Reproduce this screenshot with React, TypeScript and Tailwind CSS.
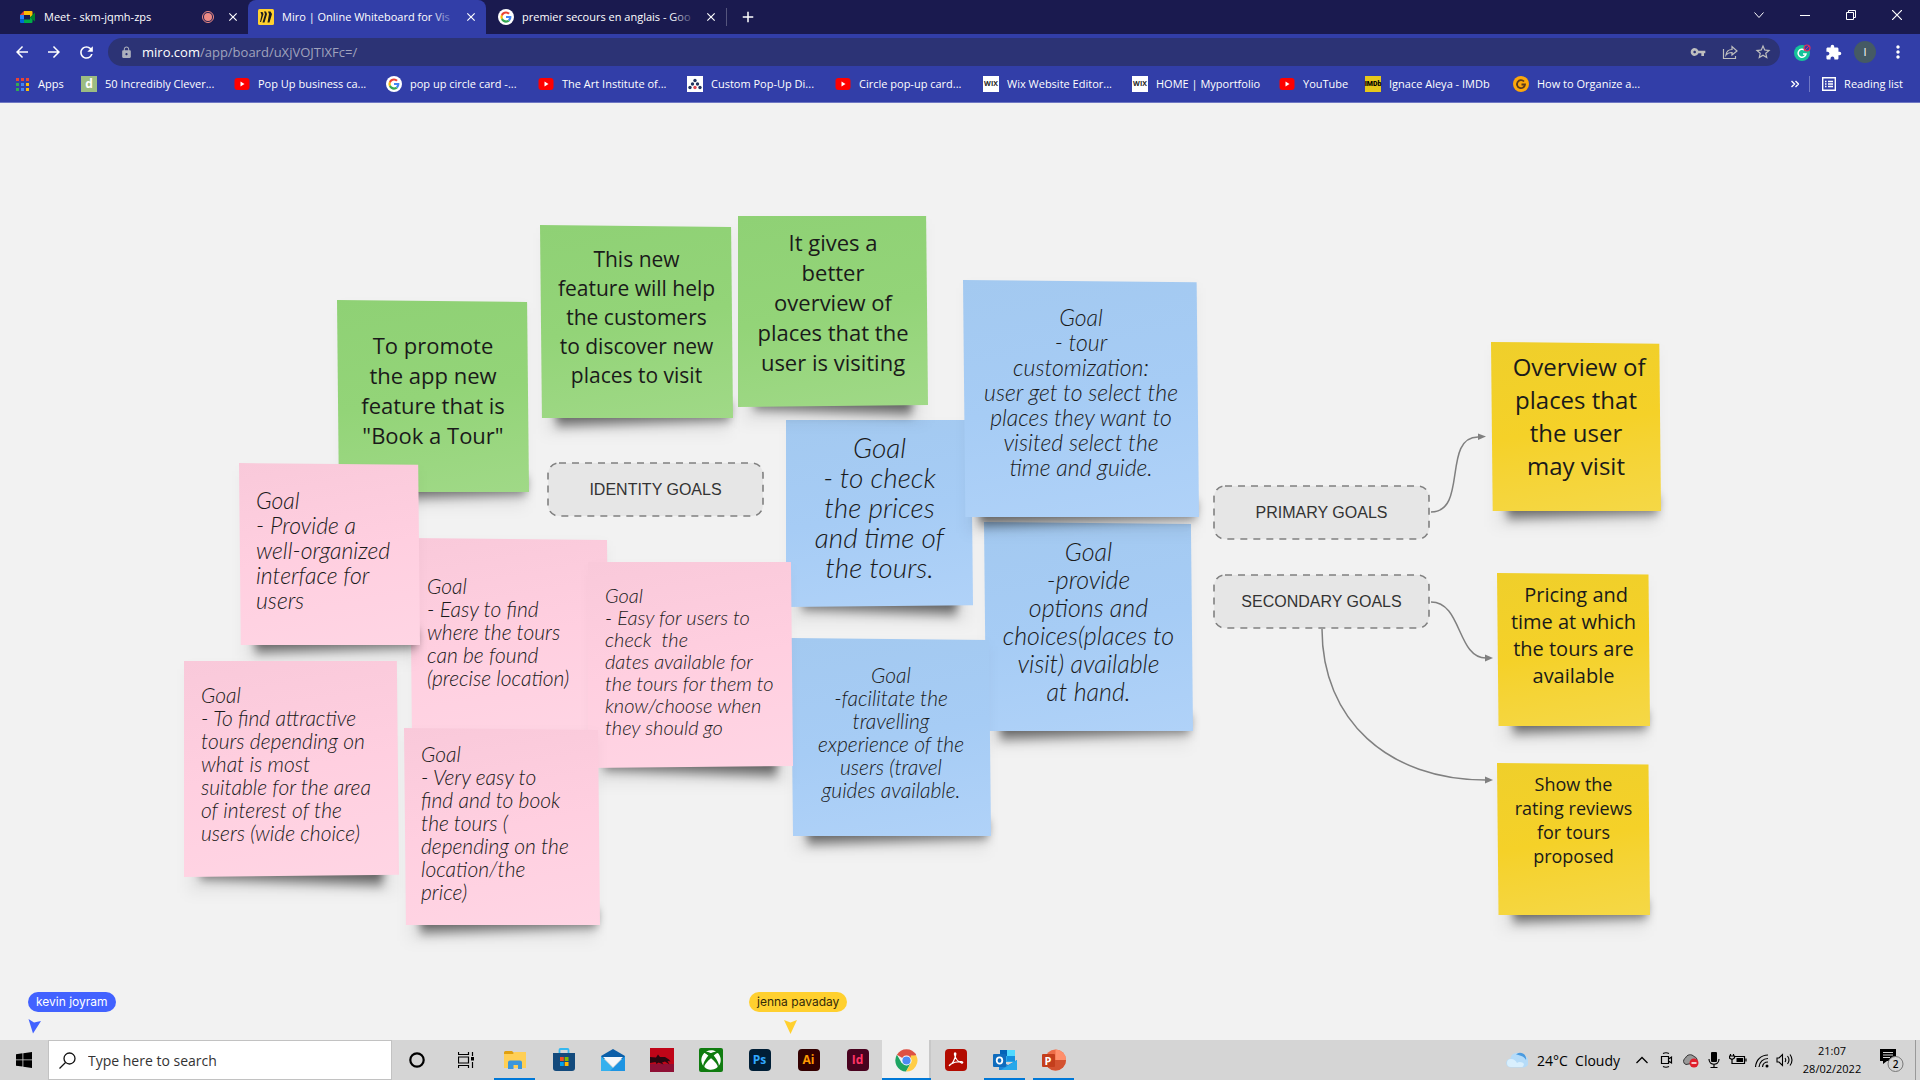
import React from 'react';
import {
  MdArrowBack, MdArrowForward, MdRefresh, MdLock, MdVpnKey, MdStarBorder, MdExtension, MdMoreVert, MdClose, MdAdd,
} from 'react-icons/md';
import { FaXbox } from 'react-icons/fa';

/* ---------- small icons ---------- */

const GoogleIcon = () => (
  <svg viewBox="0 0 16 16" className="size-4 shrink-0">
    <circle cx="8" cy="8" r="8" fill="#fff" />
    <path d="M13.4 8.1c0-.4 0-.7-.1-1H8v2h3c-.1.8-.5 1.3-1.1 1.700l1.700 1.400c1.100-1 1.800-2.400 1.800-4.100z" fill="#4285f4" />
    <path d="M8 13.700c1.500 0 2.800-.5 3.700-1.400L9.900 10.900c-.5.300-1.100.5-1.900.5-1.500 0-2.700-1-3.200-2.300L3 10.500c.9 1.900 2.800 3.200 5 3.200z" fill="#34a853" />
    <path d="M4.800 9.100a3.400 3.400 0 0 1 0-2.200L3 5.500a5.600 5.600 0 0 0 0 5z" fill="#fbbc05" />
    <path d="M8 4.600c.8 0 1.600.3 2.200.9l1.600-1.600A5.500 5.500 0 0 0 8 2.400c-2.200 0-4.100 1.200-5 3.100l1.800 1.400C5.300 5.600 6.500 4.600 8 4.600z" fill="#ea4335" />
  </svg>
);

const MeetIcon = () => (
  <svg viewBox="0 0 16 16" className="size-4 shrink-0">
    <path d="M0 6l4-4v4z" fill="#ea4335" />
    <path d="M4 2h7.500a1 1 0 0 1 1 1v3.500L10 8.500V6H4z" fill="#fbbc04" />
    <path d="M0 6h4v4.500H0z" fill="#2684fc" />
    <path d="M0 10.500h4V14H1a1 1 0 0 1-1-1z" fill="#0066da" />
    <path d="M4 10.500h6V8l2.500 2v3a1 1 0 0 1-1 1H4z" fill="#00ac47" />
    <path d="M10 8.200L15 3.500v9L10 8.500z" fill="#00832d" />
  </svg>
);

const MiroIcon = () => (
  <svg viewBox="0 0 16 16" className="size-4 shrink-0">
    <rect width="16" height="16" rx="1.500" fill="#ffd02f" />
    <path d="M2.500 3h2l1 2-2.500 8H2l1.500-7zM6 2.500h2l1 2.500-2.500 8.500h-2L7 5zM10 2.500h2.500L14 5l-2.500 8.500h-2L11 5z" fill="#1c1c1e" />
  </svg>
);

const YouTubeIcon = () => (
  <svg viewBox="0 0 16 16" className="size-4 shrink-0">
    <rect x="0.500" y="2" width="15" height="12" rx="3" fill="#f00" />
    <path d="M6.500 5.500v5l4-2.500z" fill="#fff" />
  </svg>
);

const AppsIcon = () => {
  const colors = ['#ea4335', '#ea4335', '#ea4335', '#34a853', '#4285f4', '#fbbc05', '#34a853', '#4285f4', '#fbbc05'];
  return (
    <svg viewBox="0 0 15 15" className="size-[15px] shrink-0">
      {colors.map((c, i) => (
        <rect key={i} x={(i % 3) * 5 + 1} y={Math.floor(i / 3) * 5 + 1} width="3" height="3" fill={c} />
      ))}
    </svg>
  );
};

const PopUpIcon = () => (
  <svg viewBox="0 0 16 16" className="size-4 shrink-0">
    <rect width="16" height="16" fill="#fff" />
    <g fill="#23345f">
      <circle cx="8" cy="4.500" r="1.700" /><circle cx="5.500" cy="8" r="1.700" /><circle cx="10.500" cy="8" r="1.700" />
      <circle cx="3" cy="11.500" r="1.700" /><circle cx="13" cy="11.500" r="1.700" />
    </g>
    <circle cx="8" cy="11.500" r="1.700" fill="#e2464f" />
  </svg>
);

const DIcon = () => (
  <span className="flex size-4 shrink-0 items-center justify-center bg-[#9cbc82] text-[12px] leading-4 font-bold text-white">d</span>
);
const WixIcon = () => (
  <span className="flex size-4 shrink-0 items-center justify-center bg-white text-[7px] leading-4 font-bold text-[#222]">WIX</span>
);
const ImdbIcon = () => (
  <span className="flex size-4 shrink-0 items-center justify-center bg-[#e6c71a] font-['Roboto',sans-serif] text-[7px] leading-4 font-black text-black">IMDb</span>
);
const OrangeIcon = () => (
  <svg viewBox="0 0 16 16" className="size-4 shrink-0">
    <circle cx="8" cy="8" r="8" fill="#fca70b" />
    <path d="M11 5.500A4 4 0 1 0 12 8.500H8.500" fill="none" stroke="#5b3a1c" strokeWidth="1.800" />
  </svg>
);

/* ---------- browser chrome ---------- */

function TabTitle({ children, fade }: { children: string; fade?: string }) {
  return (
    <span className="relative min-w-0 flex-1 overflow-hidden whitespace-nowrap">
      {children}
      {fade && <span className={`absolute inset-y-0 right-0 w-6 bg-linear-to-r from-transparent ${fade}`} />}
    </span>
  );
}

function TabStrip() {
  return (
    <div role="tablist" className="flex h-[34px] items-stretch bg-[#1a1a4f] text-[11px] text-white">
      <div role="tab" className="flex w-[248px] items-center gap-2 pr-2 pl-5">
        <MeetIcon />
        <TabTitle>Meet - skm-jqmh-zps</TabTitle>
        <svg viewBox="0 0 12 12" className="size-3 shrink-0"><circle cx="6" cy="6" r="5.500" fill="none" stroke="#ee8a85" /><circle cx="6" cy="6" r="4" fill="#ee8a85" /></svg>
        <button aria-label="Close tab" className="ml-1"><MdClose className="size-[14px]" /></button>
      </div>
      <div role="tab" aria-selected="true" className="flex w-[238px] items-center gap-2 rounded-t-lg bg-[#323ea8] pr-2 pl-[10px]">
        <MiroIcon />
        <TabTitle fade="to-[#323ea8]">Miro | Online Whiteboard for Vis</TabTitle>
        <button aria-label="Close tab"><MdClose className="size-[14px]" /></button>
      </div>
      <div role="tab" className="flex w-[240px] items-center gap-2 pr-2 pl-3">
        <GoogleIcon />
        <TabTitle fade="to-[#1a1a4f]">premier secours en anglais - Goo</TabTitle>
        <button aria-label="Close tab"><MdClose className="size-[14px]" /></button>
      </div>
      <div className="my-2 w-px bg-[#55557d]" />
      <button aria-label="New tab" className="w-[42px] pl-3"><MdAdd className="size-[18px]" /></button>
      <div className="ml-auto flex items-center pb-1">
        <button aria-label="Search tabs" className="flex w-[46px] justify-center">
          <svg viewBox="0 0 10 10" className="size-[10px]" fill="none" stroke="#fff"><path d="M0.500 2.500l4.500 5 4.500-5" /></svg>
        </button>
        <button aria-label="Minimize" className="flex w-[46px] justify-center">
          <svg viewBox="0 0 10 10" className="size-[10px]" fill="none" stroke="#fff"><path d="M0 5.500h10" /></svg>
        </button>
        <button aria-label="Restore" className="flex w-[46px] justify-center">
          <svg viewBox="0 0 10 10" className="size-[10px]" fill="none" stroke="#fff"><path d="M0.500 2.500h7v7h-7zM2.500 2.500v-2h7v7h-2" /></svg>
        </button>
        <button aria-label="Close" className="flex w-[46px] justify-center">
          <svg viewBox="0 0 10 10" className="size-[10px]" fill="none" stroke="#fff" strokeWidth="1.200"><path d="M0 0l10 10M10 0L0 10" /></svg>
        </button>
      </div>
    </div>
  );
}

function Toolbar() {
  return (
    <div className="flex h-8 items-center bg-[#323ea8] pt-1 text-white">
      <div className="flex w-[108px] items-center gap-[14px] pl-[13px]">
        <button aria-label="Back"><MdArrowBack className="size-[18px]" /></button>
        <button aria-label="Forward"><MdArrowForward className="size-[18px]" /></button>
        <button aria-label="Reload"><MdRefresh className="size-[19px]" /></button>
      </div>
      <div className="flex h-7 flex-1 items-center rounded-full bg-[#2c3375] pr-2 pl-3 text-[#bfbfbf]">
        <MdLock className="size-[13px] text-[#adb0bd]" />
        <label htmlFor="address" className="ml-[9px] text-[13px] leading-5 text-white">miro.com</label>
        <input id="address" defaultValue="/app/board/uXjVOJTIXFc=/" className="min-w-0 flex-1 bg-transparent text-[13px] leading-5 text-[#a0a3bd] outline-none" />
        <div className="flex items-center gap-4">
          <button aria-label="Passwords"><MdVpnKey className="size-4" /></button>
          <button aria-label="Share">
            <svg viewBox="0 0 16 16" className="size-4" fill="none" stroke="currentColor" strokeWidth="1.200"><path d="M1.500 5v9.500h12V12M4 11c.5-4 3-5.500 6-5.500V2.500L15 7l-5 4V8.500C7.500 8.500 5.500 9 4 11z" /></svg>
          </button>
          <button aria-label="Bookmark"><MdStarBorder className="size-[18px]" /></button>
        </div>
      </div>
      <div className="flex w-[140px] items-center pl-[14px]">
        <button aria-label="Grammarly">
          <svg viewBox="0 0 17 17" className="size-[17px]"><circle cx="8" cy="9" r="8" fill="#15c39a" /><path d="M10.500 6A4 4 0 1 0 12 10H9" fill="none" stroke="#fff" strokeWidth="1.500" /><circle cx="13" cy="4" r="3" fill="#323ea8" stroke="#e5305a" strokeWidth="1.200" /><path d="M11 6l4-4" stroke="#e5305a" /></svg>
        </button>
        <button aria-label="Extensions" className="ml-[14px]"><MdExtension className="size-[17px]" /></button>
        <button aria-label="Profile" className="ml-3 flex size-[22px] items-center justify-center rounded-full bg-[#455a64] text-[11px]">I</button>
        <button aria-label="Menu" className="ml-3"><MdMoreVert className="size-5" /></button>
      </div>
    </div>
  );
}

const bookmarks: { label: string; icon: () => React.ReactElement; width: string }[] = [
  { label: 'Apps', icon: AppsIcon, width: 'w-[66px]' },
  { label: '50 Incredibly Clever...', icon: DIcon, width: 'w-[153px]' },
  { label: 'Pop Up business ca...', icon: YouTubeIcon, width: 'w-[152px]' },
  { label: 'pop up circle card -...', icon: GoogleIcon, width: 'w-[152px]' },
  { label: 'The Art Institute of...', icon: YouTubeIcon, width: 'w-[149px]' },
  { label: 'Custom Pop-Up Di...', icon: PopUpIcon, width: 'w-[148px]' },
  { label: 'Circle pop-up card...', icon: YouTubeIcon, width: 'w-[148px]' },
  { label: 'Wix Website Editor...', icon: WixIcon, width: 'w-[149px]' },
  { label: 'HOME | Myportfolio', icon: WixIcon, width: 'w-[147px]' },
  { label: 'YouTube', icon: YouTubeIcon, width: 'w-[86px]' },
  { label: 'Ignace Aleya - IMDb', icon: ImdbIcon, width: 'w-[148px]' },
  { label: 'How to Organize a...', icon: OrangeIcon, width: 'w-[148px]' },
];

function BookmarkBar() {
  return (
    <nav className="flex h-[37px] items-center border-b border-[#6f78c4] bg-[#323ea8] pr-[17px] pl-[15px] text-[11px] text-white">
      {bookmarks.map(({ label, icon: Icon, width }, i) => (
        <a key={i} href="#" className={`flex shrink-0 items-center gap-2 whitespace-nowrap ${width}`}>
          <Icon />
          {label}
        </a>
      ))}
      <div className="ml-auto flex items-center">
        <button aria-label="More bookmarks">
          <svg viewBox="0 0 8 8" className="size-2" fill="none" stroke="#fff" strokeWidth="1.400"><path d="M0.500 1l3 3-3 3M4.500 1l3 3-3 3" /></svg>
        </button>
        <div className="mr-3 ml-[10px] h-4 w-px bg-[#6f78c4]" />
        <button className="flex items-center gap-2">
          <svg viewBox="0 0 14 14" className="size-[14px]" fill="none" stroke="#fff" strokeWidth="1.400"><path d="M0.700 0.700h12.600v12.600H0.700zM3 4.500h1.500M3 7h1.500M3 9.500h1.500M6 4.500h5M6 7h5M6 9.500h5" /></svg>
          Reading list
        </button>
      </div>
    </nav>
  );
}

/* ---------- board ---------- */

type Note = {
  x: number; y: number; w: number; h: number; pad: number;
  color: string; text: string; lines: string[]; lean: 'left' | 'right';
};

const GREEN = 'from-[#8fd175] via-[#93d478] to-[#a0d987]';
const BLUE = 'from-[#a3c9f0] via-[#a6ccf5] to-[#b0d2f8]';
const PINK = 'from-[#f9c9da] via-[#ffcfe0] to-[#ffd5e4]';
const YELLOW = 'from-[#efcf2b] via-[#f5d128] to-[#f5d846]';
const SANS = "text-center font-['Open_Sans',sans-serif]";
const HAND = "font-['Lato',cursive] italic font-light";

const notes: Note[] = [
  { x: 786, y: 317, w: 187, h: 187, pad: 12, color: BLUE, lean: 'right', text: `${HAND} text-center text-[28px] leading-[30px]`, lines: ['Goal', '- to check', 'the prices', 'and time of', 'the tours.'] },
  { x: 984, y: 419, w: 209, h: 209, pad: 15, color: BLUE, lean: 'left', text: `${HAND} text-center text-[25px] leading-[28px]`, lines: ['Goal', '-provide', 'options and', 'choices(places to', 'visit) available', 'at hand.'] },
  { x: 791, y: 535, w: 200, h: 198, pad: 25, color: BLUE, lean: 'left', text: `${HAND} text-center text-[21px] leading-[23px]`, lines: ['Goal', '-facilitate the', 'travelling', 'experience of the', 'users (travel', 'guides available.'] },
  { x: 738, y: 113, w: 190, h: 191, pad: 11, color: GREEN, lean: 'right', text: `${SANS} text-[22px] leading-[30px]`, lines: ['It gives a', 'better', 'overview of', 'places that the', 'user is visiting'] },
  { x: 963, y: 177, w: 236, h: 237, pad: 25, color: BLUE, lean: 'left', text: `${HAND} text-center text-[23px] leading-[25px]`, lines: ['Goal', '- tour', 'customization:', 'user get to select the', 'places they want to', 'visited select the', 'time and guide.'] },
  { x: 337, y: 197, w: 192, h: 192, pad: 30, color: GREEN, lean: 'left', text: `${SANS} text-[22px] leading-[30px]`, lines: ['To promote', 'the app new', 'feature that is', '"Book a Tour"'] },
  { x: 540, y: 122, w: 193, h: 193, pad: 20, color: GREEN, lean: 'left', text: `${SANS} text-[21px] leading-[29px]`, lines: ['This new', 'feature will help', 'the customers', 'to discover new', 'places to visit'] },
  { x: 410, y: 435, w: 199, h: 198, pad: 36, color: PINK, lean: 'left', text: `${HAND} pl-[17px] text-[21px] leading-[23px]`, lines: ['Goal', '- Easy to find', 'where the tours', 'can be found', '(precise location)'] },
  { x: 588, y: 459, w: 205, h: 206, pad: 22, color: PINK, lean: 'right', text: `${HAND} pl-[17px] text-[20px] leading-[22px]`, lines: ['Goal', '- Easy for users to', 'check  the', 'dates available for', 'the tours for them to', 'know/choose when', 'they should go'] },
  { x: 239, y: 360, w: 181, h: 182, pad: 25, color: PINK, lean: 'left', text: `${HAND} pl-[17px] text-[23px] leading-[25px]`, lines: ['Goal', '- Provide a', 'well-organized', 'interface for', 'users'] },
  { x: 184, y: 558, w: 215, h: 216, pad: 22, color: PINK, lean: 'right', text: `${HAND} pl-[17px] text-[21px] leading-[23px]`, lines: ['Goal', '- To find attractive', 'tours depending on', 'what is most', 'suitable for the area', 'of interest of the', 'users (wide choice)'] },
  { x: 404, y: 625, w: 196, h: 197, pad: 14, color: PINK, lean: 'left', text: `${HAND} pl-[17px] text-[21px] leading-[23px]`, lines: ['Goal', '- Very easy to', 'find and to book', 'the tours (', 'depending on the', 'location/the', 'price)'] },
  { x: 1491, y: 239, w: 170, h: 169, pad: 8, color: YELLOW, lean: 'left', text: `${SANS} text-[24px] leading-[33px]`, lines: [' Overview of', 'places that', 'the user', 'may visit'] },
  { x: 1497, y: 470, w: 153, h: 153, pad: 8, color: YELLOW, lean: 'left', text: `${SANS} text-[20px] leading-[27px]`, lines: [' Pricing and', 'time at which', 'the tours are', 'available'] },
  { x: 1497, y: 660, w: 153, h: 152, pad: 9, color: YELLOW, lean: 'left', text: `${SANS} text-[18px] leading-[24px]`, lines: ['Show the', 'rating reviews', 'for tours', 'proposed'] },
];

const leanShadow = {
  left: 'right-[3px] left-4 rotate-[-2deg]',
  right: 'right-4 left-4 rotate-2',
};
const leanPaper = {
  left: '[clip-path:polygon(0_0,99%_1%,100%_100%,1%_100%)]',
  right: '[clip-path:polygon(0_0,99%_0,100%_99%,0_100%)]',
};

function StickyNote({ note }: { note: Note }) {
  return (
    <article className="absolute" style={{ left: note.x, top: note.y, width: note.w, height: note.h }}>
      <div className="absolute inset-x-1 top-2 -bottom-4 bg-black/5 blur-[7px]" />
      <div className={`absolute -bottom-2 h-5 bg-linear-to-b from-black/80 to-black/20 blur-[5px] ${leanShadow[note.lean]}`} />
      <div className={`relative h-full bg-linear-170 text-[#1a1a1a] ${note.color} ${leanPaper[note.lean]}`} style={{ paddingTop: note.pad }}>
        <p className={note.text}>
          {note.lines.map((line, i) => (
            <span key={i} className="block whitespace-pre">{line}</span>
          ))}
        </p>
      </div>
    </article>
  );
}

const goals = [
  { label: 'IDENTITY GOALS', x: 547, y: 359 },
  { label: 'PRIMARY GOALS', x: 1213, y: 382 },
  { label: 'SECONDARY GOALS', x: 1213, y: 471 },
];

function GoalLabel({ label, x, y }: { label: string; x: number; y: number }) {
  return (
    <div className="absolute flex h-[55px] w-[217px] items-center justify-center" style={{ left: x, top: y }}>
      <svg viewBox="0 0 217 55" className="absolute inset-0">
        <rect x="1" y="1" width="215" height="53" rx="11" fill="#e6e6e6" stroke="#808080" strokeWidth="1.600" strokeDasharray="7 6" />
      </svg>
      <span className="relative font-['Liberation_Sans',sans-serif] text-[16px] leading-6 text-[#333]">{label}</span>
    </div>
  );
}

function Connectors() {
  return (
    <svg viewBox="0 0 180 360" className="absolute top-[327px] left-[1318px] h-[360px] w-[180px]" fill="none" stroke="#808080" strokeWidth="1.500">
      <path d="M113 82C150 82 124 7 160 7" />
      <path d="M113 172C144 172 139 228 168 228" />
      <path d="M4 199C4 290 70 350 168 350" />
      <g fill="#808080" stroke="none">
        <path d="M160 3.500l8 3-8 3.500z" /><path d="M167 224.500l8 3.500-8 3.500z" /><path d="M167 346.500l8 3.500-8 3.500z" />
      </g>
    </svg>
  );
}

function Board() {
  return (
    <main className="relative flex-1 overflow-hidden bg-[#f2f2f2]">
      {notes.map((n, i) => <StickyNote key={i} note={n} />)}
      {goals.map((g) => <GoalLabel key={g.label} {...g} />)}
      <Connectors />
      <div className="absolute top-[889px] left-[28px] rounded-full bg-[#4262ff] px-2 font-['Inter',sans-serif] text-[12px] leading-5 text-white">kevin joyram</div>
      <svg viewBox="0 0 13 15" className="absolute top-[916px] left-[28px] h-[15px] w-[13px]"><path d="M0.500 0l5.500 3.500L13 2 5 14.500z" fill="#4262ff" /></svg>
      <div className="absolute top-[889px] left-[749px] rounded-full bg-[#ffd02f] px-2 font-['Inter',sans-serif] text-[12px] leading-5 text-[#332a09]">jenna pavaday</div>
      <svg viewBox="0 0 13 14" className="absolute top-[917px] left-[784px] h-[14px] w-[13px]"><path d="M0 0l6.500 2.500L13 0 6.500 14z" fill="#ffd02f" /></svg>
    </main>
  );
}

/* ---------- taskbar ---------- */

const CortanaIcon = () => <svg viewBox="0 0 16 16" className="size-4"><circle cx="8" cy="8" r="6.700" fill="none" stroke="#000" strokeWidth="2.200" /></svg>;
const TaskViewIcon = () => (
  <svg viewBox="0 0 16 16" className="size-4" fill="none" stroke="#000" strokeWidth="1.200"><path d="M0.500 0v2.500h10V0M0.500 5h10v6h-10zM0.500 16v-2.500h10V16M14.500 0v4M14.500 10v6" /><path d="M13 5h3v3.500h-3z" fill="#000" stroke="none" /></svg>
);
const ExplorerIcon = () => (
  <svg viewBox="0 0 22 20" className="h-5 w-[22px]"><path d="M0 2.500A1.500 1.500 0 0 1 1.500 1H8l2 2v4H0z" fill="#e0a010" /><path d="M0 4h9l1.500-2H22v16H0z" fill="#ffcf55" /><path d="M4 19v-6.500a2 2 0 0 1 2-2h10a2 2 0 0 1 2 2V19h-4v-4h-1.500v0h-3v4z" fill="#3a96dd" /></svg>
);
const StoreIcon = () => (
  <svg viewBox="0 0 24 24" className="size-6"><path d="M7.500 5V2a1 1 0 0 1 1-1h7a1 1 0 0 1 1 1v3" fill="none" stroke="#35b8f0" strokeWidth="1.800" /><path d="M1 5h22v15a3 3 0 0 1-3 3H4a3 3 0 0 1-3-3z" fill="#134a7c" /><path d="M8 9h3.800v4H8z" fill="#f25022" /><path d="M12.700 9h3.800v4h-3.800z" fill="#7fba00" /><path d="M8 14h3.800v4H8z" fill="#00a4ef" /><path d="M12.700 14h3.800v4h-3.800z" fill="#ffb900" /></svg>
);
const MailIcon = () => (
  <svg viewBox="0 0 24 24" className="size-6"><path d="M0 8L12 1l12 7v3H0z" fill="#0b5ea8" /><path d="M2 9h20L12 19z" fill="#f5f8fb" /><path d="M0 8l15 15H0z" fill="#35b1ee" /><path d="M24 8L9 23h15z" fill="#1d94e2" /></svg>
);
const DragonIcon = () => (
  <svg viewBox="0 0 24 24" className="size-6"><path d="M0 0h24v24H0z" fill="#c00518" /><path d="M0 16h24v8H0z" fill="#8f1035" /><path d="M0 9l6 .500 2-3 2 2.500 5 0 4 2.500 1.500 2-3-.500 2 3.500-4.500-3-3 1 1.500 2-5-2-2 1.500-1-2-5.500 1z" fill="#2a0710" /></svg>
);
const XboxIcon = () => <span className="flex size-6 items-center justify-center rounded-[2px] bg-[#107c10] text-white"><FaXbox className="size-5" /></span>;
const PsIcon = () => <span className="flex size-[22px] items-center justify-center rounded bg-[#001e36] text-[12px] font-bold text-[#31a8ff]">Ps</span>;
const AiIcon = () => <span className="flex size-[22px] items-center justify-center rounded bg-[#330000] text-[12px] font-bold text-[#ff9a00]">Ai</span>;
const IdIcon = () => <span className="flex size-[22px] items-center justify-center rounded bg-[#49021f] text-[12px] font-bold text-[#ff3366]">Id</span>;
const ChromeIcon = () => (
  <svg viewBox="0 0 24 24" className="size-[23px]">
    <path d="M12 12L2 6a11.500 11.500 0 0 1 20 0z" fill="#dd5144" />
    <path d="M2 6a11.500 11.500 0 0 0 9.500 17.500l5-9L12 12 7 14.500z" fill="#1da462" />
    <path d="M22 6.500a11.500 11.500 0 0 1-10.500 17l5-9V6.500z" fill="#ffcd46" />
    <path d="M12 6.500h10.200L21 4.500H10z" fill="#dd5144" />
    <circle cx="12" cy="12" r="5.300" fill="#fff" /><circle cx="12" cy="12" r="4.300" fill="#4c8bf5" />
  </svg>
);
const AcrobatIcon = () => (
  <svg viewBox="0 0 22 22" className="size-[22px]"><rect width="22" height="22" rx="4" fill="#b30b00" /><path d="M4.500 16.500c2.500-1 6-6.500 6.300-11.500.1-1.500-1.600-1.300-1.300.3C10.200 9 13 13 16.500 14c1.500.3 1.700-1.200 0-1.300-3.500-.2-8 .7-11 2.500-1.300.8-1.300 1.500-1 1.300z" fill="none" stroke="#fff" strokeWidth="1.300" /></svg>
);
const OutlookIcon = () => (
  <svg viewBox="0 0 24 24" className="size-6"><path d="M7 2h15v12H7z" fill="#28a8ea" /><path d="M7 2h7v6H7z" fill="#0364b8" /><path d="M14 2h8v6h-8z" fill="#50d9ff" /><path d="M14 8h8v5h-8z" fill="#1490df" /><path d="M6 12l9 5 9-5v10H6z" fill="#1a86d8" /><path d="M24 12v10H8z" fill="#28a8ea" /><rect y="6" width="13" height="13" rx="1" fill="#0f6cbd" /><ellipse cx="6.500" cy="12.500" rx="2.800" ry="3.200" fill="none" stroke="#fff" strokeWidth="1.800" /></svg>
);
const PowerPointIcon = () => (
  <span className="relative block size-6">
    <svg viewBox="0 0 24 24" className="size-6"><circle cx="13.500" cy="12" r="10.500" fill="#ed6c47" /><path d="M13.500 1.500A10.500 10.500 0 0 1 24 12H13.500z" fill="#ff8f6b" /><path d="M3 12h21a10.500 10.500 0 0 1-21 0z" fill="#d35230" /><rect y="6" width="13" height="13" rx="1" fill="#c43e1c" /></svg>
    <span className="absolute top-[6px] left-0 w-[13px] text-center text-[11px] leading-[13px] font-bold text-white">P</span>
  </span>
);

const apps: { name: string; icon: () => React.ReactElement; state?: string }[] = [
  { name: 'Cortana', icon: CortanaIcon },
  { name: 'Task View', icon: TaskViewIcon },
  { name: 'File Explorer', icon: ExplorerIcon, state: 'open' },
  { name: 'Microsoft Store', icon: StoreIcon },
  { name: 'Mail', icon: MailIcon },
  { name: 'Dragon Center', icon: DragonIcon },
  { name: 'Xbox', icon: XboxIcon },
  { name: 'Photoshop', icon: PsIcon },
  { name: 'Illustrator', icon: AiIcon },
  { name: 'InDesign', icon: IdIcon },
  { name: 'Chrome', icon: ChromeIcon, state: 'active' },
  { name: 'Acrobat', icon: AcrobatIcon },
  { name: 'Outlook', icon: OutlookIcon, state: 'open' },
  { name: 'PowerPoint', icon: PowerPointIcon, state: 'open' },
];

function Tray() {
  return (
    <div className="ml-auto flex items-center text-black">
      <svg viewBox="0 0 22 16" className="mr-[9px] h-4 w-[22px]"><path d="M5 15.500a4.500 4.500 0 0 1-.5-9A6.500 6.500 0 0 1 16.500 4a5 5 0 0 1 1 11.500z" fill="#b5dbf8" /><path d="M10 2.500A6 6 0 0 1 20 8c-1-3-6-5-10-5.500z" fill="#4a9be0" /><path d="M5 15a4 4 0 0 1 0-8c3 0 5 2 6 4 2-2 6-1 7 1-.5 2-1 3-2 3z" fill="#d9effd" /></svg>
      <span className="w-[99px] text-[14px] whitespace-pre">24°C  Cloudy</span>
      <div className="flex items-center gap-[7px]">
        <svg viewBox="0 0 12 8" className="mr-1 h-2 w-3" fill="none" stroke="#000" strokeWidth="1.300"><path d="M0.500 7L6 1.500 11.500 7" /></svg>
        <svg viewBox="0 0 16 16" className="size-4" fill="none" stroke="#000" strokeWidth="1.200"><path d="M2.500 4.500h7v7h-7zM9.500 7l3-2v6l-3-2M4 1.500q3-1.500 6 0M4 14.500q3 1.500 6 0" /></svg>
        <svg viewBox="0 0 17 15" className="h-[15px] w-[17px]"><path d="M4 11.500a3.500 3.500 0 0 1-.5-6.500A5 5 0 0 1 12 3.500a4 4 0 0 1 2.500 6z" fill="#999" stroke="#333" /><circle cx="12" cy="10" r="4.500" fill="#e01e2b" /><path d="M9.500 10h5" stroke="#fff" strokeWidth="1.500" /></svg>
        <svg viewBox="0 0 16 16" className="size-4" fill="none" stroke="#000" strokeWidth="1.200"><rect x="5" y="0" width="6" height="10" rx="1" fill="#000" stroke="none" /><path d="M3 7c0 7 10 7 10 0M8 12v3M4.500 15.500h7" /></svg>
        <svg viewBox="0 0 18 14" className="h-[14px] w-[18px]" fill="none" stroke="#000" strokeWidth="1.200"><path d="M6 3.500h9.500v7H6M17 5.500v3" /><path d="M7.500 5h6.500v4H7.500z" fill="#000" stroke="none" /><path d="M1.500 1v2M4.500 1v2M0.500 3h5v2L3 6.500.5 5zM3 6.500v4h3" /></svg>
        <svg viewBox="0 0 15 15" className="size-[15px]" fill="none" stroke="#000" strokeWidth="1.200"><path d="M1.500 14C2 7 7 2 14 2M5 14c.5-5 4-8.500 9-8.500M8.500 14c.3-3 2.500-5 5.500-5" /><circle cx="13" cy="13" r="1.500" fill="#000" stroke="none" /></svg>
        <svg viewBox="0 0 17 14" className="h-[14px] w-[17px]" fill="none" stroke="#000" strokeWidth="1.100"><path d="M1 5h2l3.500-3.500v11L3 9H1zM9 5q1.500 2 0 4M11.500 3q3 4 0 8M14 1.500q4 5.500 0 11" /></svg>
      </div>
      <div className="ml-[9px] w-[60px] text-center text-[11px] leading-[18px]">21:07<br />28/02/2022</div>
      <button aria-label="Notifications" className="relative mr-[11px] ml-[18px] h-6 w-6">
        <svg viewBox="0 0 24 24" className="size-6"><path d="M0 1h16v12H7l-4 3v-3H0z" fill="#000" /><path d="M3 4.500h10M3 7h10M3 9.500h7" stroke="#d5d5d5" /><circle cx="15.500" cy="16" r="7.500" fill="#d5d5d5" stroke="#777" /></svg>
        <span className="absolute top-[9px] left-2 w-[15px] text-center text-[10px] leading-[14px] font-semibold">2</span>
      </button>
      <div className="h-10 w-[5px] border-l border-[#999]" />
    </div>
  );
}

function Taskbar() {
  return (
    <footer className="flex h-10 items-stretch bg-[#d5d5d5]">
      <button aria-label="Start" className="flex w-12 items-center justify-center">
        <svg viewBox="0 0 16 16" className="size-4"><path d="M0 2.200L6.500 1.300v6.200H0zM7.300 1.200L16 0v7.500H7.300zM0 8.300h6.500v6.300L0 13.700zM7.300 8.300H16V16l-8.700-1.200z" /></svg>
      </button>
      <label className="flex w-[344px] items-center gap-3 border border-[#c2c2c2] bg-white pl-[10px]">
        <svg viewBox="0 0 17 17" className="size-[17px] shrink-0" fill="none" stroke="#111" strokeWidth="1.300"><circle cx="10.500" cy="6.500" r="5.500" /><path d="M6.500 10.500L0.500 16.500" /></svg>
        <span className="sr-only">Search</span>
        <input type="text" placeholder="Type here to search" className="w-full bg-transparent text-[14px] outline-none placeholder:text-[#333]" />
      </label>
      {apps.map(({ name, icon: Icon, state }) => (
        <button key={name} aria-label={name} className={`relative flex w-[49px] items-center justify-center ${state === 'active' ? 'bg-[#f0f0f0] shadow-[inset_-2px_0_0_#c8c8c8]' : ''}`}>
          <Icon />
          {state && <span className={`absolute bottom-0 h-[2px] bg-[#0078d7] ${state === 'active' ? 'inset-x-0' : 'inset-x-1'}`} />}
        </button>
      ))}
      <Tray />
    </footer>
  );
}

export default function App() {
  return (
    <div className="flex min-h-screen flex-col overflow-hidden font-['Open_Sans',sans-serif]">
      <header>
        <TabStrip />
        <Toolbar />
        <BookmarkBar />
      </header>
      <Board />
      <Taskbar />
    </div>
  );
}
